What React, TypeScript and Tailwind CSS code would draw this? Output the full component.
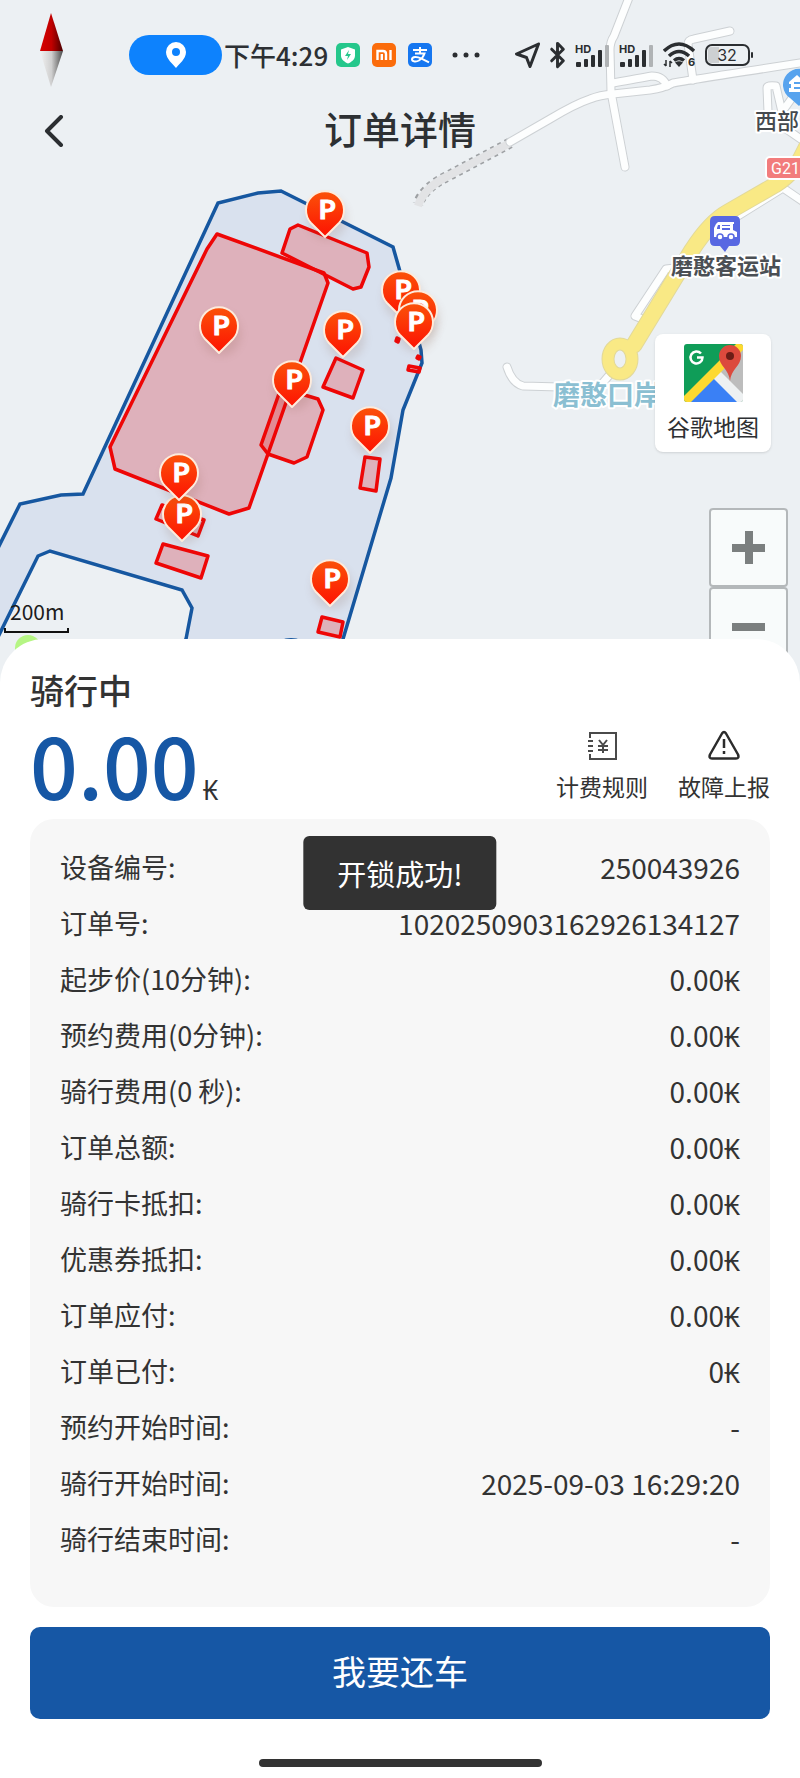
import { Bluetooth } from 'lucide-react';

const orderRows = [
  { label: '设备编号:', value: '250043926' },
  { label: '订单号:', value: '1020250903162926134127' },
  { label: '起步价(10分钟):', value: '0.00₭' },
  { label: '预约费用(0分钟):', value: '0.00₭' },
  { label: '骑行费用(0 秒):', value: '0.00₭' },
  { label: '订单总额:', value: '0.00₭' },
  { label: '骑行卡抵扣:', value: '0.00₭' },
  { label: '优惠券抵扣:', value: '0.00₭' },
  { label: '订单应付:', value: '0.00₭' },
  { label: '订单已付:', value: '0₭' },
  { label: '预约开始时间:', value: '-' },
  { label: '骑行开始时间:', value: '2025-09-03 16:29:20' },
  { label: '骑行结束时间:', value: '-' },
];

// service area, in map canvas units
const serviceArea =
  'M-20 584 L20 504 L61 495 L83 494 L218 203 L258 193 L281 191 L393 247 L399 268 L421 350 L422 363 L403 410 L391 478 L343 639 L335 665 L180 665 L186 639 L192 608 L182 590 L50 551 L38 556 L0 633 L-20 673 Z';

const parkingAreas = [
  'M217 234 L324 273 L328 283 L249 508 L229 514 L115 469 L110 447 L207 249 Z',
  'M298 225 L367 253 L369 267 L361 287 L353 289 L282 253 L290 229 Z',
  'M281 388 L318 399 L323 410 L307 457 L294 463 L268 454 L261 445 Z',
  'M336 358 L363 370 L353 398 L323 387 Z',
  'M365 457 L380 459 L376 491 L360 488 Z',
  'M162 505 L204 520 L198 536 L156 519 Z',
  'M163 544 L208 556 L201 578 L156 563 Z',
  'M322 617 L343 622 L340 637 L318 632 Z',
  'M409 366 L420 368 L419 372 L408 370 Z',
  'M418 356 L420 357 L419 359 L417 358 Z',
  'M397 338 L399 339 L398 342 L396 341 Z',
];

// tip position of every parking pin, back to front
const pins = [
  [325, 238],
  [219, 354],
  [343, 358],
  [292, 408],
  [370, 454],
  [401, 318],
  [418, 338],
  [414, 350],
  [182, 542],
  [179, 501],
  [330, 607],
];

const roads = [
  'M510 142 L550 119 Q575 104 590 99 Q600 95 613 94 L650 90 Q664 88 673 83 Q690 80 800 63',
  'M630 -5 L614 36 Q610 42 610 50 L611 92 L625 167',
  'M613 83 Q640 78 652 76 Q663 76 667 86',
  'M693 80 L688 44 Q688 40 694 39 L730 31',
  'M768 112 L767 88 Q767 85 776 86 L782 112 L792 98',
  'M779 124 L805 142',
  'M738 216 L783 188 L805 203',
  'M675 268 L666 269 L635 316 L645 320',
  'M507 367 Q512 383 523 386 L560 387 L600 386 L612 372',
];

const ParkingPin = ({ x, y }: { x: number; y: number }) => (
  <g transform={`translate(${x} ${y})`}>
    <ellipse cx="2" cy="-20" rx="20" ry="22" fill="#7a4a30" opacity="0.14" filter="url(#soft)" />
    <path
      d="M0 -1 L-14 -15 A19 19 0 1 1 14 -15 Z"
      fill="url(#pin)"
      stroke="#fdebdc"
      strokeWidth="2"
      strokeLinejoin="round"
    />
    <text
      x="2"
      y="-19"
      textAnchor="middle"
      fontSize="27"
      fontWeight="700"
      fill="#fff"
      stroke="#fff"
      strokeWidth="1"
      fontFamily="Lato, sans-serif"
    >
      P
    </text>
  </g>
);

const MapCanvas = () => (
  <svg
    className="absolute inset-x-0 top-0 h-[700px] w-full"
    viewBox="0 0 800 700"
    preserveAspectRatio="xMidYMin slice"
    fontFamily="'Noto Sans CJK SC', sans-serif"
  >
    <defs>
      <linearGradient id="pin" x1="0" y1="0" x2="0" y2="1">
        <stop offset="0" stopColor="#fb5209" />
        <stop offset="1" stopColor="#fd1202" />
      </linearGradient>
      <linearGradient id="needleRed" x1="0" x2="1">
        <stop offset="0" stopColor="#d80000" />
        <stop offset="0.5" stopColor="#c00000" />
        <stop offset="1" stopColor="#4a0000" />
      </linearGradient>
      <linearGradient id="needleGray" x1="0" x2="1">
        <stop offset="0" stopColor="#f2f2f2" />
        <stop offset="0.5" stopColor="#cfcfcf" />
        <stop offset="1" stopColor="#4c4c4c" />
      </linearGradient>
      <filter id="soft" x="-50%" y="-50%" width="200%" height="200%">
        <feGaussianBlur stdDeviation="4" />
      </filter>
    </defs>

    <rect width="800" height="700" fill="#ecf0f3" />

    {/* tunnel */}
    <path d="M510 143 L450 175 Q424 187 418 204" fill="none" stroke="#9ea1a4" strokeWidth="11" strokeDasharray="4 4" />
    <path d="M510 143 L450 175 Q424 187 418 206" fill="none" stroke="#e2e3e5" strokeWidth="8" />

    <g fill="none" strokeLinecap="round" strokeLinejoin="round">
      {roads.map((d) => (
        <path key={d} d={d} stroke="#cdd1d4" strokeWidth="9" />
      ))}
      {roads.map((d) => (
        <path key={d} d={d} stroke="#fdfefe" strokeWidth="7" />
      ))}
      <path d="M806 148 Q796 172 775 185 L728 212 Q710 222 692 250 L634 345" stroke="#e2d99a" strokeWidth="17" />
      <ellipse cx="620" cy="359" rx="12" ry="15" stroke="#e2d99a" strokeWidth="13" />
      <path d="M806 148 Q796 172 775 185 L728 212 Q710 222 692 250 L634 345" stroke="#f9e985" strokeWidth="15" />
      <ellipse cx="620" cy="359" rx="12" ry="15" stroke="#f9e985" strokeWidth="11" />
    </g>

    <rect x="766" y="157" width="50" height="22" rx="4" fill="#f27c7c" stroke="#fff" strokeWidth="2" />
    <text x="771" y="174" fontSize="16" fill="#fff" fontFamily="Roboto, sans-serif">
      G214
    </text>

    <path d="M799 106 L790 98 A16 16 0 1 1 808 98 Z" fill="#57a3ee" />
    <path d="M789 82 L797 75 L805 82 V92 H789 V88 H791 V84 H789 Z" fill="#fff" />
    <path d="M794 83 H802 M794 88 H802" stroke="#57a3ee" strokeWidth="2" />

    {/* coach station */}
    <path
      d="M715 216 H735 Q740 216 740 221 V241 Q740 246 735 246 H729 L725 252 L720 246 H715 Q710 246 710 241 V221 Q710 216 715 216 Z"
      fill="#5868e2"
    />
    <path d="M716 224 L718 222 H734 V224 H733 V230 L737 232 V237 H714 V228 Z" fill="#fff" />
    <path d="M717 228 L718 225 H720 V229 H717 Z M722 225 H730 V226 H722 Z M722 228 H730 V230 H722 Z" fill="#5868e2" />
    <circle cx="720" cy="237" r="3" fill="#fff" stroke="#5868e2" strokeWidth="1.5" />
    <circle cx="731" cy="237" r="3" fill="#fff" stroke="#5868e2" strokeWidth="1.5" />

    <g fontWeight="600" stroke="#fff" strokeWidth="4" strokeLinejoin="round" paintOrder="stroke">
      <text x="755" y="129" fontSize="22" fontWeight="500" fill="#45494e">
        西部
      </text>
      <text x="671" y="274" fontSize="22" fill="#4b4f54">
        磨憨客运站
      </text>
      <text x="553" y="405" fontSize="27" fill="#8bbfd2">
        磨憨口岸
      </text>
    </g>

    <circle cx="28" cy="648" r="13" fill="#b5f584" />

    <path d={serviceArea} fill="#2050b8" fillOpacity="0.09" stroke="#1657a0" strokeWidth="3.5" />
    <ellipse cx="291" cy="645" rx="14" ry="7" fill="#1657a0" />
    {parkingAreas.map((d) => (
      <path key={d} d={d} fill="#f00000" fillOpacity="0.21" stroke="#ee0606" strokeWidth="3.5" strokeLinejoin="round" />
    ))}
    {pins.map(([x, y]) => (
      <ParkingPin key={`${x}-${y}`} x={x} y={y} />
    ))}

    {/* compass needle */}
    <path d="M51 13 L63 51 H40 Z" fill="url(#needleRed)" />
    <path d="M40 51 H63 L51 87 Z" fill="url(#needleGray)" />

    {/* scale */}
    <text x="10" y="620" fontSize="21" fill="#1c1c1c">
      200m
    </text>
    <path d="M5 628 V632 H68 V628" fill="none" stroke="#111" strokeWidth="2" />
  </svg>
);

const Signal = () => (
  <svg className="h-7 w-[35px]" viewBox="0 -4 35 28" fill="#2b2e31">
    <text x="0" y="8" fontSize="11" fontWeight="700" fontFamily="Inter, sans-serif">
      HD
    </text>
    <rect x="1" y="17" width="5" height="5" rx="1" />
    <rect x="9" y="14" width="4" height="8" rx="1" />
    <rect x="16" y="10" width="4" height="12" rx="1" />
    <rect x="23" y="5" width="4" height="17" rx="1" />
    <rect x="30" y="0" width="4" height="22" rx="1" fill="#b0b3b5" />
  </svg>
);

const StatusBar = () => (
  <div className="flex h-[110px] items-center justify-between pr-[46px] pl-[129px]">
    <div className="flex items-center">
      <div className="flex h-10 w-[93px] items-center justify-center rounded-full bg-[#0d82fd]">
        <svg className="h-[26px] w-5" viewBox="0 0 20 26" fill="#fff">
          <path fillRule="evenodd" d="M10 0a10 10 0 0 1 10 10c0 7-7 12-10 16C7 22 0 17 0 10A10 10 0 0 1 10 0zm0 6a4 4 0 1 0 0 8 4 4 0 0 0 0-8z" />
        </svg>
      </div>
      <span className="ml-0.5 text-[26px] leading-8 font-medium whitespace-nowrap">下午4:29</span>
      <div className="ml-2 flex items-center gap-3">
        <svg className="size-6" viewBox="0 0 24 24">
          <rect width="24" height="24" rx="5" fill="#25c78b" />
          <path d="M12 4l7 2.500v6c0 4-3.500 6.500-7 8-3.500-1.500-7-4-7-8v-6z" fill="#fff" />
          <path d="M13 7l-4 6h3l-1 4 4-6h-3z" fill="#25c78b" />
        </svg>
        <svg className="size-6" viewBox="0 0 24 24">
          <rect width="24" height="24" rx="5" fill="#fb6c0b" />
          <path d="M5.500 17V8H11q3 0 3 3v6M9.800 11v6M18.500 7v10" fill="none" stroke="#fff" strokeWidth="2.400" />
        </svg>
        <svg className="size-6" viewBox="0 0 24 24">
          <rect width="24" height="24" rx="5" fill="#1677f0" />
          <path
            d="M12 4v6M5 7h14M7 10.500h9.500c-1 3-3 5.500-5.500 7-2.500 1.500-7 1.500-7-1.200 0-3.300 5.500-2.800 9-1l8 4"
            fill="none"
            stroke="#fff"
            strokeWidth="2"
          />
        </svg>
      </div>
      <svg className="ml-5 h-1.5 w-7" viewBox="0 0 28 6" fill="#2b2e31">
        <circle cx="3" cy="3" r="2.500" />
        <circle cx="14" cy="3" r="2.500" />
        <circle cx="25" cy="3" r="2.500" />
      </svg>
    </div>
    <div className="flex items-center gap-[9px]">
      <svg className="h-[26px] w-[25px]" viewBox="0 0 25 26" fill="none" stroke="#2b2e31" strokeWidth="3" strokeLinejoin="round">
        <path d="M23.500 2L1.500 12l10 3.500L15 24.500z" />
      </svg>
      <Bluetooth className="-mx-1.5 h-7 w-[29px]" color="#2b2e31" strokeWidth={2.5} />
      <Signal />
      <Signal />
      <svg className="h-[26px] w-[33px]" viewBox="0 0 33 26" fill="none" stroke="#2b2e31" strokeWidth="3.5">
        <path d="M1 9q15-14 30 0M6 14q10-9 20 0M11 18.500q5-4 10 0" />
        <path d="M12 20.500q4-2.500 8 0l-4 4.500z" fill="#2b2e31" stroke="none" />
        <path d="M3 18v6M1 22l2 2M7 25v-6M9 21l-2-2" strokeWidth="1.500" />
        <text x="25" y="24" fontSize="11" fontWeight="700" fill="#2b2e31" stroke="none" fontFamily="Inter, sans-serif">
          6
        </text>
      </svg>
      <svg className="h-[22px] w-[49px]" viewBox="0 0 49 22">
        <path d="M6 3h8v16H6q-3 0-3-3V6q0-3 3-3z" fill="#cdd0d2" />
        <rect x="1" y="1" width="43" height="20" rx="6" fill="none" stroke="#2b2e31" strokeWidth="2" />
        <rect x="46" y="8" width="2" height="6" rx="1" fill="#2b2e31" />
        <text x="22" y="17" textAnchor="middle" fontSize="16" fill="#2b2e31" fontFamily="Inter, sans-serif">
          32
        </text>
      </svg>
    </div>
  </div>
);

const GoogleMapsIcon = () => (
  <svg className="h-[58px] w-[59px]" viewBox="0 0 59 58">
    <defs>
      <clipPath id="tile">
        <rect width="59" height="58" rx="3" />
      </clipPath>
    </defs>
    <g clipPath="url(#tile)">
      <rect width="59" height="58" fill="#0f9d58" />
      <path d="M30 29 L59 0 V58 H30 Z" fill="#bdbdbd" />
      <path d="M6 58 L30 34 L54 58 Z" fill="#3a80f5" />
      <path d="M29 34 L36 27 L59 50 V58 H53 Z" fill="#eef1f2" />
      <path d="M0 52 L52 0 H59 V6 L7 58 H0 Z" fill="#fdd930" />
      <path d="M46 37 C45 25 35 22 35 12 A11 11 0 0 1 57 12 C57 22 47 25 46 37 Z" fill="#dc4a3d" />
      <circle cx="46" cy="12" r="4" fill="#6b1d16" />
    </g>
    <path d="M17 9.500 A6 6 0 1 0 18.500 13.500 H13" fill="none" stroke="#fff" strokeWidth="2.500" />
  </svg>
);

const BillingIcon = () => (
  <svg className="size-8" viewBox="0 0 32 32" fill="none" stroke="#4a4a4a" strokeWidth="2">
    <path d="M4 8V3h26v26H4v-5" />
    <path d="M2 11h5M2 16h5M2 21h5" />
    <path d="M13 10l4 5 4-5M17 15v8M12 16h10M12 20h10" />
  </svg>
);

const FaultIcon = () => (
  <svg className="size-8" viewBox="0 0 32 32" fill="none" stroke="#2c2c2c" strokeWidth="2.500" strokeLinejoin="round">
    <path d="M14 3.500q2-3 4 0l12 21q1.500 4-2 4H4q-3.500 0-2-4z" />
    <path d="M16 9v9M16 21v3" />
  </svg>
);

const App = () => {
  return (
    <div className="relative min-h-screen bg-[#ecf0f3] font-['Noto_Sans_CJK_SC','Noto_Sans',sans-serif] text-[#2d3033]">
      <MapCanvas />

      <div className="relative h-[639px]">
        <StatusBar />
        <header className="grid h-[42px] grid-cols-[1fr_auto_1fr] items-center">
          <button type="button" aria-label="返回" className="ml-11 w-8">
            <svg className="h-8 w-5" viewBox="0 0 20 32" fill="none" stroke="#2b2e31" strokeWidth="4" strokeLinecap="round" strokeLinejoin="round">
              <path d="M17 2L3 16l14 14" />
            </svg>
          </button>
          <h1 className="pb-1.5 text-[38px] leading-9 font-medium">订单详情</h1>
        </header>

        <div className="mt-[182px] flex flex-col items-end">
          <button type="button" className="mr-[29px] flex h-[118px] w-[116px] flex-col items-center rounded-lg bg-white pt-2.5 shadow-sm">
            <GoogleMapsIcon />
            <span className="mt-2 text-[23px] leading-8">谷歌地图</span>
          </button>
          <div className="mt-14 mr-3 flex flex-col">
            <button type="button" aria-label="放大" className="flex size-[79px] items-center justify-center rounded-sm border-2 border-[#b4b8ba] bg-[#f8fbfb]">
              <svg className="size-[33px]" viewBox="0 0 33 33" stroke="#7b7f7f" strokeWidth="8">
                <path d="M0 17h33M17 0v33" />
              </svg>
            </button>
            <button type="button" aria-label="缩小" className="flex size-[79px] items-center justify-center rounded-sm border-2 border-[#b4b8ba] bg-[#f8fbfb]">
              <svg className="size-[33px]" viewBox="0 0 33 33" stroke="#7b7f7f" strokeWidth="8">
                <path d="M0 17h33" />
              </svg>
            </button>
          </div>
        </div>
      </div>

      <main className="relative z-10 rounded-t-[44px] bg-white px-[30px] pt-7 pb-3 text-[#333]">
        <h2 className="mb-1 text-[34px] leading-[46px] font-medium">骑行中</h2>
        <div className="flex h-[102px] items-center justify-between">
          <p className="pt-4 text-[84px] leading-[86px] font-medium text-[#1657a5]">
            0.00<span className="ml-1 text-[27px] font-normal text-[#333]">₭</span>
          </p>
          <div className="flex gap-[30px] pb-1">
            <button type="button" className="flex flex-col items-center gap-2 text-[23px] leading-8">
              <BillingIcon />
              计费规则
            </button>
            <button type="button" className="flex flex-col items-center gap-2 text-[23px] leading-8">
              <FaultIcon />
              故障上报
            </button>
          </div>
        </div>

        <section className="relative rounded-3xl bg-[#f7f7f7] px-[30px] pt-5 pb-10">
          <dl>
            {orderRows.map((row) => (
              <div key={row.label} className="flex h-14 items-center justify-between">
                <dt className="text-[27px]">{row.label}</dt>
                <dd className="text-[28px]">{row.value}</dd>
              </div>
            ))}
          </dl>
          <div role="status" className="absolute top-[17px] left-1/2 -translate-x-1/2 rounded-md bg-[#323232] px-[34px] py-4 text-[29px] leading-[42px] whitespace-nowrap text-white">
            开锁成功!
          </div>
        </section>

        <button type="button" className="mt-5 h-[92px] w-full rounded-[10px] bg-[#1657a5] pb-1.5 text-[34px] text-white">
          我要还车
        </button>
        <div className="mx-auto mt-10 h-2 w-[283px] rounded-full bg-[#333]" />
      </main>
    </div>
  );
};

export default App;
